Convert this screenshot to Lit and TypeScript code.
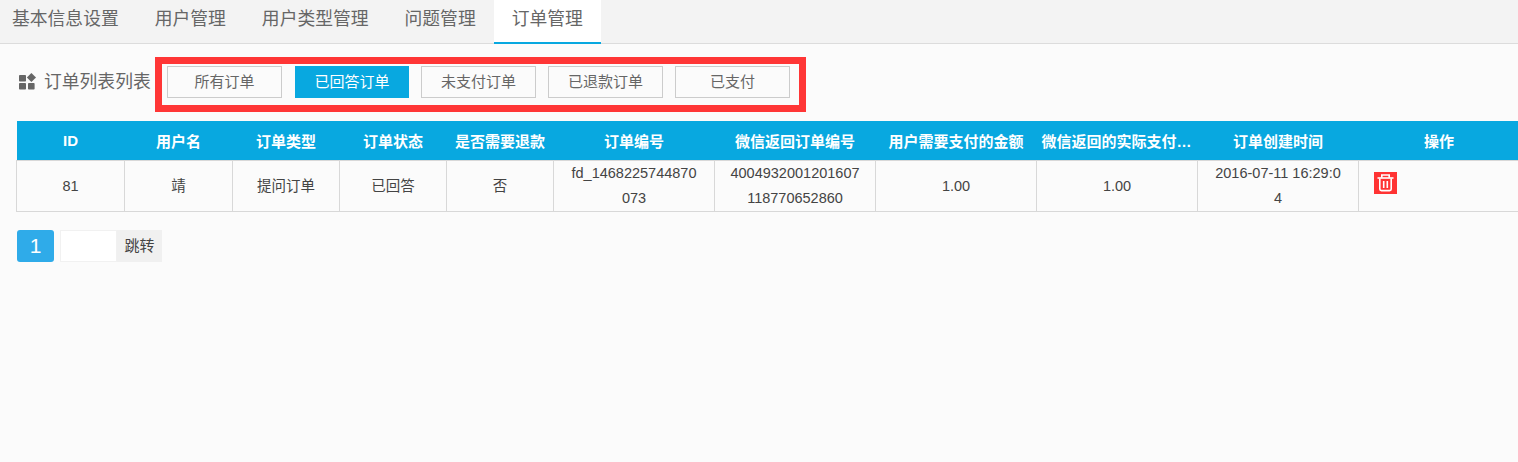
import { LitElement, html, css, svg } from "lit";
import { customElement } from "lit/decorators.js";

const TABS = ["基本信息设置", "用户管理", "用户类型管理", "问题管理", "订单管理"];
const BTNS = ["所有订单", "已回答订单", "未支付订单", "已退款订单", "已支付"];
const COLS = [108, 108, 107, 107, 107, 161, 161, 161, 161, 161, 161];
const HEAD = ["ID", "用户名", "订单类型", "订单状态", "是否需要退款", "订单编号", "微信返回订单编号", "用户需要支付的金额", "微信返回的实际支付金额", "订单创建时间", "操作"];
const ROW = ["81", "靖", "提问订单", "已回答", "否", "fd_1468225744870073", "4004932001201607118770652860", "1.00", "1.00", "2016-07-11 16:29:04"];

@customElement("app-root")
export class AppRoot extends LitElement {
  static styles = css`
    :host { display: block; height: 462px; overflow: hidden; background: #fbfbfb; font-family: "Liberation Sans", "Noto Sans CJK SC", sans-serif; color: #666; }
    .tabs { display: flex; height: 43px; background: #f3f3f3; border-bottom: 1px solid #dcdcdc; padding-left: 12px; }
    .tab { height: 43px; box-sizing: border-box; line-height: 39px; font-size: 17.8px; margin-right: 36px; color: #666; white-space: nowrap; }
    .tab.active { background: #fff; border-bottom: 2px solid #08a8e0; margin: 0 0 -1px -18px; height: 44px; padding: 0 18px; box-sizing: border-box; }
    .bar { display: flex; align-items: flex-start; padding: 13px 0 0 18px; height: 55px; }
    .title { display: flex; align-items: center; gap: 8px; font-size: 17.8px; line-height: 20px; margin-top: 15px; width: 137px; white-space: nowrap; color: #666; }
    .title svg { display: block; }
    .box { display: flex; gap: 12px; height: 55px; box-sizing: border-box; border: 7px solid #ff3636; padding: 2px 0 0 5px; width: 651px; }
    .btn { flex: none; width: 115px; height: 32px; box-sizing: border-box; border: 1px solid #ccc; background: #fbfbfb; color: #666; font-size: 15px; line-height: 30px; text-align: center; white-space: nowrap; }
    .btn:first-child { margin-right: 1px; }
    .btn.on { background: #08a8e0; border-color: #08a8e0; color: #fff; width: 114px; }
    .wrap { margin: 9px 0 0 16px; width: 1502px; overflow: hidden; }
    table { border-collapse: collapse; table-layout: fixed; width: 1503px; font-size: 14.5px; }
    th { height: 39px; padding: 0 5px; background: #08a8e0; color: #fff; font-size: 15px; font-weight: bold; white-space: nowrap; overflow: hidden; text-overflow: ellipsis; border: 0; }
    td { height: 51px; padding: 0 15px; border: 1px solid #d8d8d8; text-align: center; color: #444; line-height: 25px; word-break: break-all; box-sizing: border-box; }
    td.op { text-align: left; padding: 0 0 6px 15px; }
    td.op svg { display: block; }
    .pager { display: flex; margin: 18px 0 0 17px; height: 32px; }
    .page { width: 37px; height: 32px; border-radius: 3px; background: #2fabe9; color: #fff; font-size: 21px; line-height: 32px; text-align: center; }
    input { width: 57px; height: 32px; box-sizing: border-box; margin: 0 0 0 6px; padding: 0; border: 1px solid #f1f1f1; background: #fff; outline: none; }
    .go { width: 45px; height: 32px; background: #f0f0f0; color: #444; font-size: 15px; line-height: 32px; text-align: center; }
  `;

  private gridIcon() {
    return svg`<svg width="18" height="18" viewBox="0 -1 18 18" fill="#666">
      <rect x="1" y="1" width="7" height="6.6" rx=".8"/><rect x="1" y="9" width="7" height="6.6" rx=".8"/><rect x="10" y="9" width="6.6" height="6.6" rx=".8"/>
      <path d="M13.4 -1 L18 3.5 L13.4 8 L8.9 3.5 Z"/></svg>`;
  }

  private trashIcon() {
    return svg`<svg width="23" height="22" viewBox="0 0 23 22">
      <rect width="23" height="22" fill="#ff3333"/>
      <g fill="none" stroke="#fff" stroke-width="1.6">
        <path d="M3.5 6 H19.5"/><path d="M7.8 5.8 V3 H15.2 V5.8"/>
        <path d="M5.8 6.5 V17 Q5.8 18.6 7.4 18.6 H15.6 Q17.2 18.6 17.2 17 V6.5"/>
        <path d="M9.7 9 V16"/><path d="M13.3 9 V16"/>
      </g></svg>`;
  }

  render() {
    return html`
      <div class="tabs">
        ${TABS.map((t, i) => html`<div class="tab ${i === 4 ? "active" : ""}">${t}</div>`)}
      </div>
      <div class="bar">
        <div class="title">${this.gridIcon()}<span>订单列表列表</span></div>
        <div class="box">
          ${BTNS.map((b, i) => html`<div class="btn ${i === 1 ? "on" : ""}">${b}</div>`)}
        </div>
      </div>
      <div class="wrap">
        <table>
          <colgroup>${COLS.map((w) => html`<col style="width:${w}px" />`)}</colgroup>
          <thead><tr>${HEAD.map((h) => html`<th>${h}</th>`)}</tr></thead>
          <tbody><tr>
            ${ROW.map((c) => html`<td>${c}</td>`)}
            <td class="op">${this.trashIcon()}</td>
          </tr></tbody>
        </table>
      </div>
      <div class="pager">
        <div class="page">1</div>
        <input />
        <div class="go">跳转</div>
      </div>
    `;
  }
}
